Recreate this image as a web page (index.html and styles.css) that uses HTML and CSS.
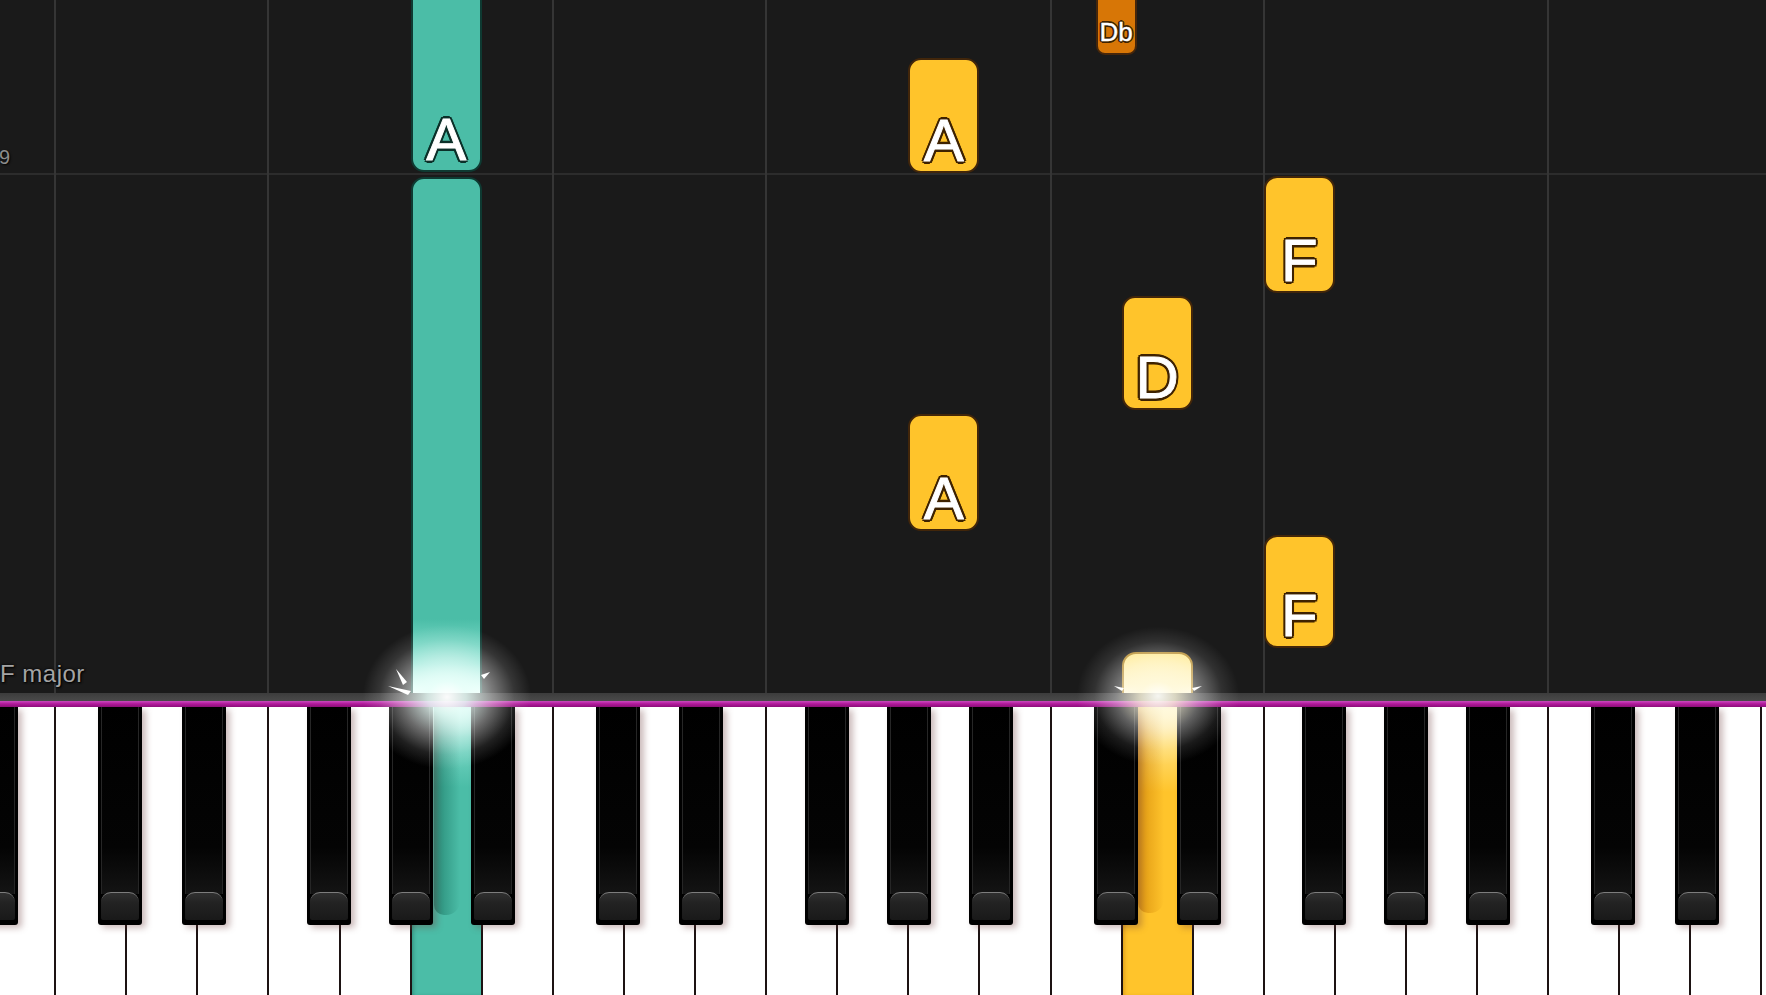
FILE: index.html
```html
<!DOCTYPE html>
<html lang="en">
<head>
<meta charset="utf-8">
<title>Piano roll</title>
<link rel="stylesheet" href="styles.css">
</head>
<body>
<div class="stage">
  <div class="roll">
    <div class="measure-line"></div>
    <span class="measure-num">9</span>
    <span class="key-sig">F major</span>
    <div class="cols">
      <div class="col"></div>
      <div class="col"></div>
      <div class="col line"></div>
      <div class="col"></div>
      <div class="col"></div>
      <div class="col line"></div>
      <div class="col"></div>
      <div class="col">
        <div class="note teal" style="top:-20px;height:192px"><span class="lbl">A</span></div>
        <div class="note teal active" style="top:177px;height:540px"></div>
      </div>
      <div class="col"></div>
      <div class="col line"></div>
      <div class="col"></div>
      <div class="col"></div>
      <div class="col line"></div>
      <div class="col"></div>
      <div class="col">
        <div class="note gold" style="top:58px;height:115px"><span class="lbl">A</span></div>
        <div class="note gold" style="top:414px;height:117px"><span class="lbl">A</span></div>
      </div>
      <div class="col"></div>
      <div class="col line">
        <div class="note orange sharp" style="top:-20px;height:75px"><span class="lbl small">Db</span></div>
      </div>
      <div class="col">
        <div class="note gold" style="top:296px;height:114px"><span class="lbl">D</span></div>
        <div class="note gold-active" style="top:652px;height:60px"></div>
      </div>
      <div class="col"></div>
      <div class="col line">
        <div class="note gold" style="top:176px;height:117px"><span class="lbl">F</span></div>
        <div class="note gold" style="top:535px;height:113px"><span class="lbl">F</span></div>
      </div>
      <div class="col"></div>
      <div class="col"></div>
      <div class="col"></div>
      <div class="col line"></div>
      <div class="col"></div>
      <div class="col"></div>
      <div class="col"></div>
    </div>
  </div>
  <div class="hitbar"></div>
  <div class="rail"></div>
  <div class="keyboard">
    <div class="wk"><div class="bk as"></div></div>
    <div class="wk"></div>
    <div class="wk"><div class="bk cs"></div></div>
    <div class="wk"><div class="bk ds"></div></div>
    <div class="wk"></div>
    <div class="wk"><div class="bk fs"></div></div>
    <div class="wk"><div class="bk gs"></div></div>
    <div class="wk pressed-teal"><div class="bk as"></div></div>
    <div class="wk"></div>
    <div class="wk"><div class="bk cs"></div></div>
    <div class="wk"><div class="bk ds"></div></div>
    <div class="wk"></div>
    <div class="wk"><div class="bk fs"></div></div>
    <div class="wk"><div class="bk gs"></div></div>
    <div class="wk"><div class="bk as"></div></div>
    <div class="wk"></div>
    <div class="wk"><div class="bk cs"></div></div>
    <div class="wk pressed-gold"><div class="bk ds"></div></div>
    <div class="wk"></div>
    <div class="wk"><div class="bk fs"></div></div>
    <div class="wk"><div class="bk gs"></div></div>
    <div class="wk"><div class="bk as"></div></div>
    <div class="wk"></div>
    <div class="wk"><div class="bk cs"></div></div>
    <div class="wk"><div class="bk ds"></div></div>
    <div class="wk"></div>
    <div class="wk"><div class="bk fs"></div></div>
  </div>

  <div class="glow glow-teal"></div>
  <div class="glow glow-gold"></div>
  <svg class="sparks sparks-teal" viewBox="0 0 120 45" width="120" height="45">
    <polygon points="8,26 31,31 28,35" fill="#ffffff"/>
    <polygon points="16,9 27,22 23,25" fill="#ffffff"/>
    <polygon points="101,15 110,12 104,19" fill="#ffffff"/>
  </svg>
  <svg class="sparks sparks-gold" viewBox="0 0 100 20" width="100" height="20">
    <polygon points="6,10 16,12 14,15" fill="#ffffff"/>
    <polygon points="94,10 84,12 86,15" fill="#ffffff"/>
  </svg>
</div>
</body>
</html>
```
FILE: styles.css
```css
* { box-sizing: border-box; margin: 0; padding: 0; }
html, body { width: 1766px; height: 995px; overflow: hidden; background: #1a1a1a; }
body { font-family: "Liberation Sans", Arial, sans-serif; }

.stage {
  position: relative;
  width: 1766px;
  height: 995px;
  overflow: hidden;
  display: flex;
  flex-direction: column;
}

/* ---------- note roll ---------- */
.roll {
  position: relative;
  flex: none;
  height: 693px;
  overflow: hidden;
  background: #1a1a1a;
}
.cols {
  display: flex;
  height: 100%;
  margin-left: -87px;
}
.col {
  flex: 0 0 71.1px;
  position: relative;
  height: 100%;
}
.col.line::before {
  content: "";
  position: absolute;
  left: -1px;
  top: 0;
  bottom: 0;
  width: 2px;
  background: #353535;
}
.measure-line {
  position: absolute;
  left: 0;
  right: 0;
  top: 173px;
  height: 2px;
  background: #2c2c2c;
}
.measure-num {
  position: absolute;
  left: -1px;
  top: 147px;
  font-size: 20px;
  line-height: 20px;
  color: #8c8c8c;
  text-shadow: 1px 1px 2px #000;
  z-index: 2;
}
.key-sig {
  position: absolute;
  left: 0;
  top: 662px;
  font-size: 24px;
  line-height: 24px;
  letter-spacing: 0.5px;
  color: #a4a4a4;
  text-shadow: 1px 1px 2px #000, 0 0 3px #000;
  z-index: 2;
}

.note {
  position: absolute;
  left: 0;
  right: 0;
  border-radius: 13px;
  display: flex;
  justify-content: center;
  align-items: flex-end;
}
.note.gold { background: #ffc42b; border: 2px solid #42260a; }
.note.teal { background: #4bbda7; border: 2px solid #0e3a32; }
.note.orange { background: #d77606; border: 2px solid #46260a; }
.note.sharp { left: 45px; right: auto; width: 41px; border-radius: 9px; }
.note.teal.active {
  background: linear-gradient(to bottom, #4bbda7 0, #4bbda7 440px, #8fe6d5 485px, #dafff7 508px, #f4fffd 516px);
}
.note.gold-active {
  background: linear-gradient(to bottom, #ffe98c 0, #fff3bd 30px, #fffbe6 41px);
  border: 2px solid #b58a2a;
  border-radius: 14px 14px 0 0;
}

.lbl {
  font-size: 60px;
  line-height: 60px;
  color: #fff;
  -webkit-text-stroke: 0.9px #fff;
}
.gold .lbl, .orange .lbl {
  text-shadow:
    2.6px 0 0 #3e2200, -2.6px 0 0 #3e2200, 0 2.6px 0 #3e2200, 0 -2.6px 0 #3e2200,
    1.9px 1.9px 0 #3e2200, -1.9px 1.9px 0 #3e2200, 1.9px -1.9px 0 #3e2200, -1.9px -1.9px 0 #3e2200,
    0 0 3px #3e2200;
}
.teal .lbl {
  text-shadow:
    2.6px 0 0 #0b3029, -2.6px 0 0 #0b3029, 0 2.6px 0 #0b3029, 0 -2.6px 0 #0b3029,
    1.9px 1.9px 0 #0b3029, -1.9px 1.9px 0 #0b3029, 1.9px -1.9px 0 #0b3029, -1.9px -1.9px 0 #0b3029,
    0 0 3px #0b3029;
}
.lbl.small {
  font-size: 26px;
  line-height: 26px;
  padding-bottom: 8px;
  -webkit-text-stroke: 0.4px #fff;
}
.orange .lbl.small {
  text-shadow:
    1.8px 0 0 #3e2200, -1.8px 0 0 #3e2200, 0 1.8px 0 #3e2200, 0 -1.8px 0 #3e2200,
    1.3px 1.3px 0 #3e2200, -1.3px 1.3px 0 #3e2200, 1.3px -1.3px 0 #3e2200, -1.3px -1.3px 0 #3e2200;
}

/* ---------- hit line ---------- */
.hitbar {
  flex: none;
  height: 8px;
  background: linear-gradient(to bottom, #3c3c3c, #4a4a4a);
}
.rail {
  flex: none;
  height: 6px;
  background: linear-gradient(to bottom, #c94bbd 0, #b31b9d 45%, #8d0e7a 100%);
}

/* ---------- keyboard ---------- */
.keyboard {
  position: relative;
  flex: none;
  height: 288px;
  display: flex;
  margin-left: -87px;
}
.wk {
  flex: 0 0 71.1px;
  position: relative;
  height: 100%;
  background: #ffffff;
}
.wk::after {
  content: "";
  position: absolute;
  right: -1px;
  top: 0;
  bottom: 0;
  width: 2px;
  background: #1d1313;
  z-index: 1;
}
.wk.pressed-teal {
  background: linear-gradient(to bottom, #c9f7ee 0, #7ad8c6 30px, #4bbda7 80px, #4bbda7 100%);
  box-shadow: inset 4px 0 4px -2px rgba(10, 80, 66, 0.45);
}
.wk.pressed-teal::before {
  content: "";
  position: absolute;
  left: 23px;
  top: 0;
  width: 26px;
  height: 208px;
  border-radius: 0 0 14px 10px;
  background: linear-gradient(to right, rgba(22, 110, 92, 0.65), rgba(22, 110, 92, 0));
}
.wk.pressed-gold {
  background: linear-gradient(to bottom, #fff6cc 0, #ffdf78 35px, #ffc42b 85px, #ffc42b 100%);
  box-shadow: inset 4px 0 4px -2px rgba(160, 90, 0, 0.45);
}
.wk.pressed-gold::before {
  content: "";
  position: absolute;
  left: 16px;
  top: 0;
  width: 26px;
  height: 206px;
  border-radius: 0 0 14px 10px;
  background: linear-gradient(to right, rgba(200, 120, 0, 0.6), rgba(200, 120, 0, 0));
}

.bk {
  position: absolute;
  top: 0;
  width: 44px;
  height: 218px;
  z-index: 3;
  background: #000;
  border-radius: 0 0 3px 3px;
  box-shadow: 4px 3px 6px rgba(110, 60, 60, 0.35);
}
.bk::before {
  content: "";
  position: absolute;
  left: 3px;
  right: 3px;
  top: 0;
  bottom: 31px;
  border-left: 1px solid #262626;
  border-right: 1px solid #262626;
  background: linear-gradient(to bottom, #000 0, #040404 75%, #141414 100%);
}
.bk::after {
  content: "";
  position: absolute;
  left: 3px;
  right: 3px;
  bottom: 5px;
  height: 27px;
  border-radius: 10px 10px 2px 2px;
  border-top: 1px solid #7d7d7d;
  background: linear-gradient(to bottom, #303030 0, #232323 35%, #191919 100%);
}
.bk.cs { left: 43px; }
.bk.ds { left: 55.4px; }
.bk.fs { left: 38.7px; }
.bk.gs { left: 49.6px; }
.bk.as { left: 60.5px; }

/* ---------- glows (overlay) ---------- */
.glow {
  position: absolute;
  z-index: 5;
  pointer-events: none;
  border-radius: 50%;
}
.glow-teal {
  left: 362px;
  top: 624px;
  width: 170px;
  height: 146px;
  background: radial-gradient(ellipse at 50% 50%,
    rgba(255, 255, 255, 0.98) 0,
    rgba(235, 255, 250, 0.85) 16%,
    rgba(255, 255, 255, 0.42) 38%,
    rgba(255, 255, 255, 0.12) 56%,
    rgba(255, 255, 255, 0) 70%);
}
.glow-gold {
  left: 1076px;
  top: 626px;
  width: 164px;
  height: 140px;
  background: radial-gradient(ellipse at 50% 50%,
    rgba(255, 255, 250, 0.95) 0,
    rgba(255, 250, 225, 0.8) 15%,
    rgba(255, 255, 255, 0.38) 36%,
    rgba(255, 255, 255, 0.1) 55%,
    rgba(255, 255, 255, 0) 70%);
}
.sparks {
  position: absolute;
  z-index: 6;
  pointer-events: none;
  filter: blur(0.6px);
}
.sparks-teal { left: 380px; top: 660px; }
.sparks-gold { left: 1108px; top: 676px; }
```
